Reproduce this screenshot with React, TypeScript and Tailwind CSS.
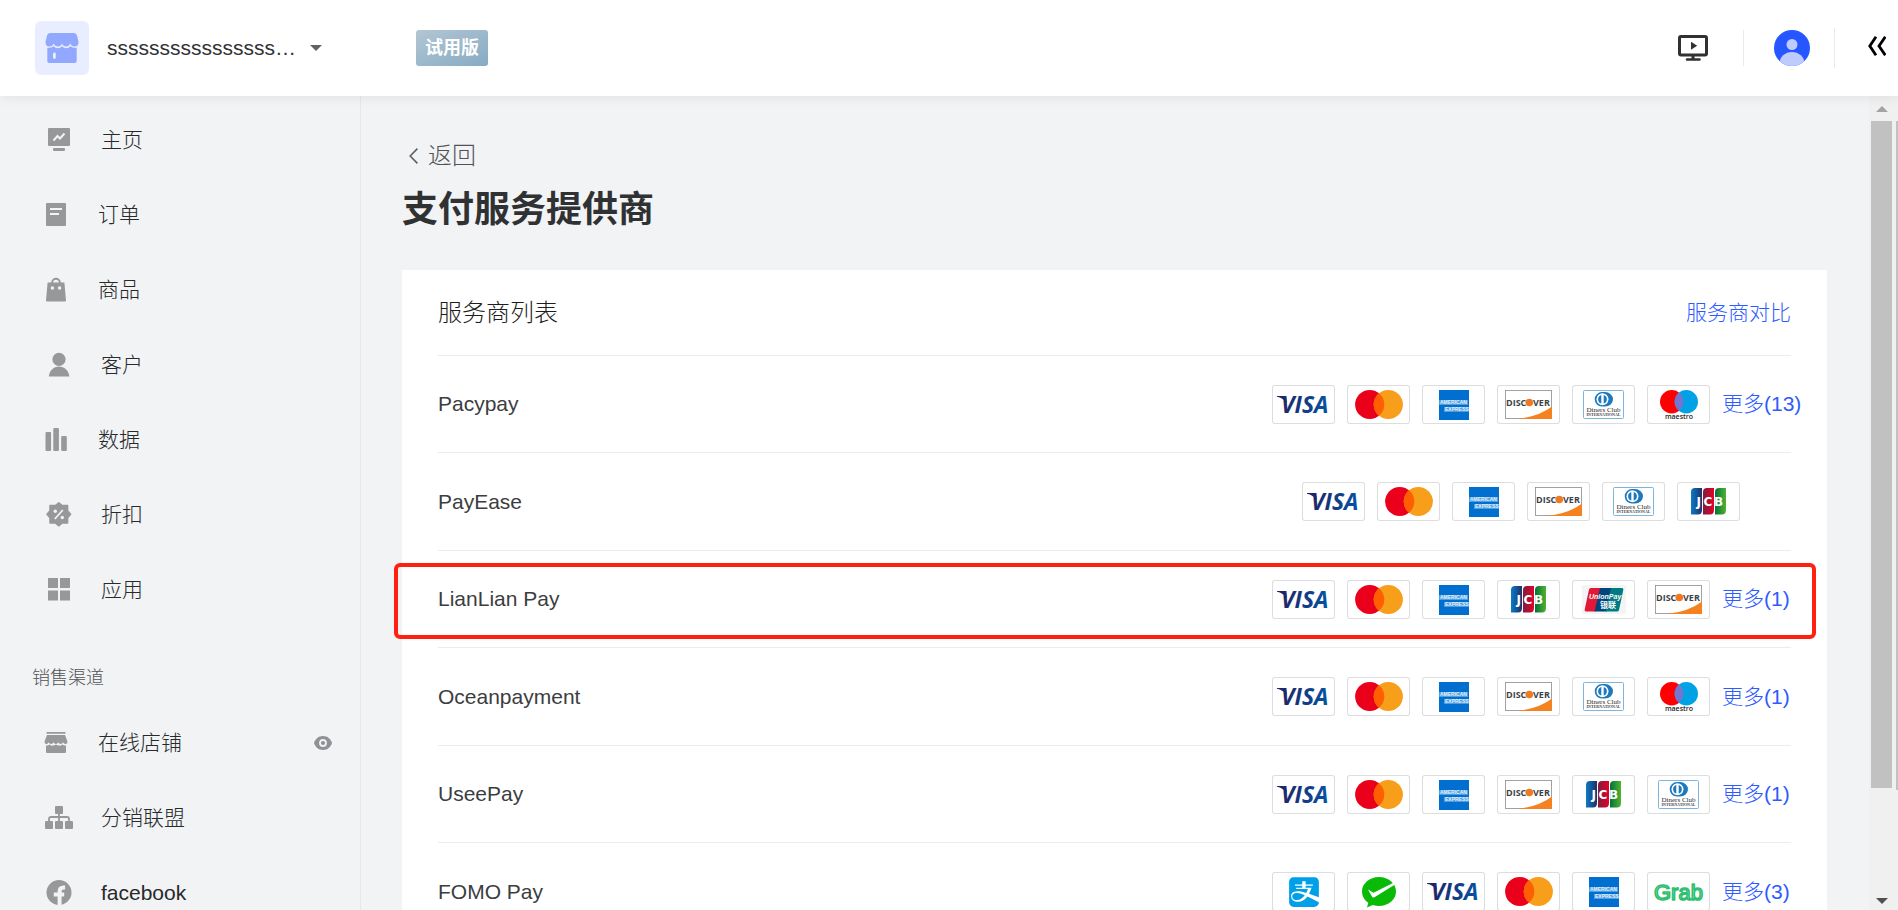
import React from 'react';
import clsx from 'clsx';
import { FaAlipay } from 'react-icons/fa';

type Brand =
  | 'visa'
  | 'mastercard'
  | 'amex'
  | 'discover'
  | 'diners'
  | 'maestro'
  | 'jcb'
  | 'unionpay'
  | 'alipay'
  | 'wechat'
  | 'grab';

interface Provider {
  name: string;
  brands: Brand[];
  more?: number;
  highlighted?: boolean;
}

interface NavItem {
  label: string;
  icon: React.ReactNode;
  wide?: boolean;
  preview?: boolean;
}

const PAGE_BG = '#f1f3f5';

const providers: Provider[] = [
  { name: 'Pacypay', brands: ['visa', 'mastercard', 'amex', 'discover', 'diners', 'maestro'], more: 13 },
  { name: 'PayEase', brands: ['visa', 'mastercard', 'amex', 'discover', 'diners', 'jcb'] },
  { name: 'LianLian Pay', brands: ['visa', 'mastercard', 'amex', 'jcb', 'unionpay', 'discover'], more: 1, highlighted: true },
  { name: 'Oceanpayment', brands: ['visa', 'mastercard', 'amex', 'discover', 'diners', 'maestro'], more: 1 },
  { name: 'UseePay', brands: ['visa', 'mastercard', 'amex', 'discover', 'jcb', 'diners'], more: 1 },
  { name: 'FOMO Pay', brands: ['alipay', 'wechat', 'visa', 'mastercard', 'amex', 'grab'], more: 3 },
];

const mainNav: NavItem[] = [
  {
    label: '主页',
    wide: true,
    icon: (
      <>
        <rect x="4" y="2" width="22" height="18" rx="1" />
        <rect x="9" y="22" width="12" height="3" rx="1" />
        <path d="M9.5 14.5l4-4.5 2.5 2.5 4.5-5" fill="none" stroke={PAGE_BG} strokeWidth="2" />
      </>
    ),
  },
  {
    label: '订单',
    icon: (
      <>
        <rect x="2" y="2" width="20" height="23" rx="1" />
        <path d="M6 8h12M6 13h9" stroke={PAGE_BG} strokeWidth="2" />
      </>
    ),
  },
  {
    label: '商品',
    icon: (
      <>
        <path d="M3.6 6.5h16.8L22 24.5q0 1-1 1H3q-1 0-1-1z" />
        <path d="M8.2 7.5V6.4a3.8 3.6 0 0 1 7.6 0v1.1" fill="none" stroke="#979899" strokeWidth="2" />
        <circle cx="8.4" cy="12" r="1.7" fill={PAGE_BG} />
        <circle cx="15.6" cy="12" r="1.7" fill={PAGE_BG} />
      </>
    ),
  },
  {
    label: '客户',
    wide: true,
    icon: (
      <>
        <circle cx="15" cy="8.4" r="6.6" />
        <path d="M4.8 25.4C5.6 19.4 9.8 15.6 15 15.6s9.6 3.8 10.4 9.8z" />
      </>
    ),
  },
  {
    label: '数据',
    icon: (
      <>
        <rect x="1.5" y="6" width="5.6" height="19" rx="1" />
        <rect x="9.3" y="2" width="5.6" height="23" rx="1" />
        <rect x="17.2" y="10" width="5.6" height="15" rx="1" />
      </>
    ),
  },
  {
    label: '折扣',
    wide: true,
    icon: (
      <>
        <path
          d="M14.8 1.8l3.4 2.8h5.4v5.2l3 3.5-3 3.500v5.200h-5.400l-3.400 2.800-3.400-2.800H6v-5.200l-3-3.500 3-3.500V4.600h5.400z"
          stroke="#979899"
          strokeWidth="1.500"
          strokeLinejoin="round"
        />
        <path d="M18.8 9l-8 9" stroke={PAGE_BG} strokeWidth="1.8" />
        <circle cx="11.300" cy="10.300" r="1.700" fill={PAGE_BG} />
        <circle cx="18.300" cy="16.500" r="1.700" fill={PAGE_BG} />
      </>
    ),
  },
  {
    label: '应用',
    wide: true,
    icon: <path d="M4 2h10v10H4zM16 2h10v10H16zM4 14.5h10v10H4zM16 14.5h10v10H16z" />,
  },
];

const channelNav: NavItem[] = [
  {
    label: '在线店铺',
    preview: true,
    icon: (
      <>
        <rect x="2.5" y="3" width="19" height="1.8" rx=".5" />
        <path d="M3 6h18l2.5 6.5q0 2.5-2 2.5t-2.4-1.7q-.6 1.7-2.400 1.700t-2.400-1.700q-.6 1.700-2.400 1.700t-2.400-1.700q-.6 1.700-2.400 1.700t-2.400-1.700Q4.200 15 2.400 15 .5 15 .5 12.500z" />
        <path d="M2 16.5q2.300.4 3.500-.9 1.300 1.300 3.200 1 2-.1 3.300-1.200 1.300 1.100 3.300 1.200 1.900.3 3.200-1 1.200 1.300 3.500.9v6.500q0 1-1 1H3q-1 0-1-1z" />
      </>
    ),
  },
  {
    label: '分销联盟',
    wide: true,
    icon: (
      <>
        <rect x="11" y="2" width="8" height="8" rx="1" />
        <rect x="1" y="17" width="8" height="8" rx="1" />
        <rect x="11" y="17" width="8" height="8" rx="1" />
        <rect x="21" y="17" width="8" height="8" rx="1" />
        <path d="M15 9v9M5 18v-3q0-2 2-2h16q2 0 2 2v3" fill="none" stroke="#979899" strokeWidth="1.800" />
      </>
    ),
  },
  {
    label: 'facebook',
    wide: true,
    icon: (
      <>
        <circle cx="15" cy="13.5" r="12.5" />
        <path d="M15.6 27V12.5q0-4 4-4h1.5M9.800 15.500h10.400" fill="none" stroke={PAGE_BG} strokeWidth="4" />
      </>
    ),
  },
];

const Visa = () => (
  <>
    <defs>
      <linearGradient id="visaFill" x1="0" x2="1">
        <stop offset="0" stopColor="#1f2566" />
        <stop offset="1" stopColor="#0653a4" />
      </linearGradient>
    </defs>
    <path d="M5 11h6.500q2 .2 2.500 2l1 5Q11 13 5 11.800z" fill="#1f2566" />
    <text x="9" y="28" fontSize="23" fontWeight="bold" fontStyle="italic" fontFamily="Open Sans, sans-serif" fill="url(#visaFill)">
      VISA
    </text>
  </>
);

const Mastercard = () => (
  <>
    <circle cx="22.7" cy="19.5" r="14.6" fill="#eb001b" />
    <circle cx="41.3" cy="19.5" r="14.6" fill="#f79e1b" />
    <path d="M32 8.25a14.600 14.600 0 0 1 0 22.500 14.600 14.600 0 0 1 0-22.500z" fill="#ff5f00" />
  </>
);

const Amex = () => (
  <>
    <rect x="17" y="5" width="30" height="30" fill="#006fcf" />
    <rect x="17" y="15" width="29" height="5" fill="#4f9fe0" />
    <rect x="22" y="22" width="25" height="5" fill="#4f9fe0" />
    <text x="18" y="19" fontSize="5" fontWeight="bold" fill="#e3f1fc">AMERICAN</text>
    <text x="23" y="26" fontSize="5" fontWeight="bold" fill="#e3f1fc">EXPRESS</text>
  </>
);

const Discover = () => (
  <>
    <rect x="8.500" y="5.500" width="46" height="28" fill="#fff" stroke="#8b8b8b" strokeWidth=".8" />
    <path d="M20 34Q42 31.500 55 21.500V34z" fill="#f58220" />
    <text x="9" y="21" fontSize="9" fontWeight="bold" fontFamily="Open Sans, sans-serif" fill="#3d4147">DISC</text>
    <circle cx="32.300" cy="17.500" r="3.800" fill="#f07a24" />
    <text x="36" y="21" fontSize="9" fontWeight="bold" fontFamily="Open Sans, sans-serif" fill="#3d4147">VER</text>
  </>
);

const Diners = () => (
  <>
    <rect x="11.500" y="5.500" width="40" height="28" rx="1" fill="#fff" stroke="#7db5dc" />
    <path d="M30 7h3a8 7.300 0 0 1 0 14.600h-3A7.300 7.300 0 0 1 30 7z" fill="#1d79bd" />
    <circle cx="30.500" cy="14.300" r="6" fill="#fff" />
    <path d="M29.300 10a4.500 4.500 0 0 0 0 8.600zM31.700 10a4.500 4.500 0 0 1 0 8.600z" fill="#1d79bd" />
    <text x="31.500" y="27" fontSize="7" textAnchor="middle" fontFamily="Liberation Serif, serif" fill="#2b2b2b">Diners Club</text>
    <text x="31.500" y="31" fontSize="4" fontWeight="bold" textAnchor="middle" fontFamily="Liberation Serif, serif" fill="#444">INTERNATIONAL</text>
  </>
);

const Maestro = () => (
  <>
    <circle cx="24.700" cy="16.700" r="11.700" fill="#ff0000" />
    <circle cx="39.300" cy="16.700" r="11.700" fill="#00a2e5" />
    <path d="M32 7.550a11.700 11.700 0 0 1 0 18.300 11.700 11.700 0 0 1 0-18.300z" fill="#7375cf" />
    <text x="32" y="34" fontSize="7" fontWeight="600" textAnchor="middle" fontFamily="Open Sans, sans-serif" fill="#222">maestro</text>
  </>
);

const Jcb = () => (
  <>
    <defs>
      <linearGradient id="jcbBlue" x1="0" x2="1">
        <stop offset="0" stopColor="#0b7cc4" />
        <stop offset="1" stopColor="#1f2f6e" />
      </linearGradient>
      <linearGradient id="jcbRed" x1="0" x2="1">
        <stop offset="0" stopColor="#7c1f3b" />
        <stop offset="1" stopColor="#e6002d" />
      </linearGradient>
      <linearGradient id="jcbGreen" x1="0" x2="1">
        <stop offset="0" stopColor="#00733c" />
        <stop offset="1" stopColor="#53b230" />
      </linearGradient>
    </defs>
    <path d="M18 6h7v22q0 4.500-4 4.500h-7V10q0-4 4-4z" fill="url(#jcbBlue)" />
    <path d="M30 6h7v22q0 4.500-4 4.500h-7V10q0-4 4-4z" fill="url(#jcbRed)" />
    <path d="M42 6h7v22q0 4.500-4 4.500h-7V10q0-4 4-4z" fill="url(#jcbGreen)" />
    <g fontSize="12" fontWeight="bold" fontFamily="DejaVu Sans, sans-serif" fill="#fff">
      <text x="19.500" y="24">J</text>
      <text x="26.500" y="24">C</text>
      <text x="37" y="24">B</text>
    </g>
  </>
);

const UnionPay = () => (
  <>
    <rect x="10" y="5" width="44" height="29" fill="#f4f4f4" />
    <path d="M19 8h10l-5.500 23.500H14q-1.800 0-1.300-2L17 9.500Q17.400 8 19 8z" fill="#e21836" />
    <path d="M28 8h12l-5.500 23.500H22.500z" fill="#00447c" />
    <path d="M39 8h11q1.800 0 1.300 2L47 30q-.4 1.500-2 1.500H33.500z" fill="#007b84" />
    <text x="17" y="19" fontSize="7" fontWeight="bold" fontStyle="italic" fill="#fff">UnionPay</text>
    <text x="28" y="28" fontSize="8" fontWeight="bold" fill="#fff" fontFamily="Noto Sans CJK SC, sans-serif">银联</text>
  </>
);

const Alipay = () => <FaAlipay x="15" y="3" size={34} color="#00a0e9" />;

const WechatPay = () => (
  <>
    <path d="M32 5c9.500 0 17 6.500 17 14.500S41.500 34 32 34c-2.200 0-4.400-.3-6.300-1L20 35.500l1.300-4.700C17.400 28 15 24 15 19.500 15 11.500 22.500 5 32 5z" fill="#09bb07" />
    <path d="M21 17.500l5.500 3.200L47 10.500l1 2-20.500 12.700q-2 1-2.700-1z" fill="#fff" />
  </>
);

const Grab = () => (
  <text x="7" y="28" fontSize="22" fill="#b8ecd0" stroke="#2fbf71" strokeWidth="1.600" strokeLinejoin="round">Grab</text>
);

const brandLogos: Record<Brand, { title: string; Logo: React.FC }> = {
  visa: { title: 'Visa', Logo: Visa },
  mastercard: { title: 'Mastercard', Logo: Mastercard },
  amex: { title: 'American Express', Logo: Amex },
  discover: { title: 'Discover', Logo: Discover },
  diners: { title: 'Diners Club', Logo: Diners },
  maestro: { title: 'Maestro', Logo: Maestro },
  jcb: { title: 'JCB', Logo: Jcb },
  unionpay: { title: 'UnionPay', Logo: UnionPay },
  alipay: { title: 'Alipay', Logo: Alipay },
  wechat: { title: 'WeChat Pay', Logo: WechatPay },
  grab: { title: 'Grab', Logo: Grab },
};

const BrandCard: React.FC<{ brand: Brand }> = ({ brand }) => {
  const { title, Logo } = brandLogos[brand];
  return (
    <div className="w-[63px] h-[39px] rounded-[3px] bg-white ring-1 ring-inset ring-[#dcdddf]">
      <svg viewBox="0 0 63 39" className="w-full h-full" role="img" aria-label={title} fontFamily="Liberation Sans, sans-serif">
        <Logo />
      </svg>
    </div>
  );
};

const NavLink: React.FC<{ item: NavItem }> = ({ item }) => (
  <li className="h-[75px] pl-11 pr-7 flex items-center">
    <a href="#" className="flex flex-1 items-center gap-[30px] text-[21px] leading-8 font-light text-[#28292b]">
      <svg
        viewBox={item.wide ? '0 0 27 27' : '0 0 24 27'}
        className={clsx('h-[27px] shrink-0 overflow-visible', item.wide ? 'w-[27px]' : 'w-6')}
        fill="#979899"
        aria-hidden="true"
      >
        {item.icon}
      </svg>
      <span>{item.label}</span>
    </a>
    {item.preview && (
      <button aria-label="预览">
        <svg viewBox="0 0 18 14" className="w-[18px] h-[14px]" fill="none">
          <path d="M9 0c4.500 0 7.700 2.800 9 7-1.300 4.200-4.500 7-9 7s-7.700-2.800-9-7c1.300-4.200 4.500-7 9-7z" fill="#8f9195" />
          <circle cx="9" cy="7" r="3" stroke={PAGE_BG} strokeWidth="1.800" />
        </svg>
      </button>
    )}
  </li>
);

const Header = () => (
  <header className="relative z-10 h-24 shrink-0 flex items-center justify-between bg-white pl-[35px] pr-3 shadow-[0_1px_12px_rgba(0,0,0,0.08)]">
    <div className="flex items-center">
      <div className="w-[54px] h-[54px] rounded-md bg-[#e8eeff] flex items-center justify-center">
        <svg viewBox="0 0 34 30" className="w-[34px] h-[30px]" fill="#92a8ff" aria-hidden="true">
          <path d="M5 0h24q2.500 0 3 2.500L33.500 9q0 4.500-4 4.500-3 0-4.200-3-1.200 3-4.200 3t-4.100-3q-1.200 3-4.200 3t-4.100-3q-1.200 3-4.200 3-4 0-4-4.500L2 2.500Q2.500 0 5 0z" />
          <path d="M2.300 14.700q3.700.6 6.200-1.500 1.800 2 4.200 2 2.600 0 4.300-2 1.700 2 4.300 2 2.400 0 4.200-2 2.500 2.100 6.200 1.500V28q0 2-2 2H4.300q-2 0-2-2z" />
          <rect x="8" y="19.500" width="2.800" height="6.500" rx="1.400" fill="#e8eeff" />
        </svg>
      </div>
      <button className="ml-[18px] flex items-center gap-[13px] text-[21px] leading-8 text-[#303133]">
        <span className="w-[190px] whitespace-nowrap text-left">ssssssssssssssss…</span>
        <svg viewBox="0 0 12 6" className="w-3 h-[6px]" fill="#606266" aria-hidden="true">
          <path d="M0 0h12L6 6z" />
        </svg>
      </button>
      <span className="ml-[94px] w-[72px] h-9 rounded-[3px] bg-linear-to-br from-[#b3c6d3] to-[#86abc4] text-lg font-bold text-white flex items-center justify-center">
        试用版
      </span>
    </div>
    <div className="flex items-center">
      <button aria-label="教程">
        <svg viewBox="0 0 30 26" className="w-[30px] h-[26px]" fill="none" stroke="#303133" aria-hidden="true">
          <rect x="1.500" y="1.500" width="27" height="18.500" rx="1.500" strokeWidth="3" />
          <path d="M15 20v4" strokeWidth="3" />
          <path d="M9 24.500h12.500" strokeWidth="2.500" strokeLinecap="round" />
          <path d="M13 6.800l6.200 4-6.200 4z" fill="#303133" stroke="none" />
        </svg>
      </button>
      <span className="ml-[35px] w-px h-9 bg-[#e8eaec]" />
      <button className="ml-[30px]" aria-label="账户">
        <svg viewBox="0 0 36 36" className="w-9 h-9" aria-hidden="true">
          <clipPath id="avatarClip">
            <circle cx="18" cy="18" r="18" />
          </clipPath>
          <g clipPath="url(#avatarClip)">
            <rect width="36" height="36" fill="#2656ff" />
            <circle cx="18" cy="14.500" r="5.500" fill="#becbff" />
            <ellipse cx="18" cy="33.500" rx="12.500" ry="11.500" fill="#becbff" />
          </g>
        </svg>
      </button>
      <span className="ml-6 w-px h-10 bg-[#e8eaec]" />
      <button className="ml-[33px]" aria-label="收起">
        <svg viewBox="0 0 18 20" className="w-[18px] h-5 mb-1" fill="none" stroke="#000" strokeWidth="2.800" aria-hidden="true">
          <path d="M8 .8L1.800 10 8 19.200M17.300.8L11 10l6.300 9.200" />
        </svg>
      </button>
    </div>
  </header>
);

const Sidebar = () => (
  <nav className="w-[361px] shrink-0 overflow-hidden border-r border-[#e6e8ea] pt-[6px]">
    <ul>
      {mainNav.map((item) => (
        <NavLink key={item.label} item={item} />
      ))}
    </ul>
    <h2 className="px-8 pt-[38px] pb-[13px] text-lg leading-[27px] font-light text-[#505255]">销售渠道</h2>
    <ul>
      {channelNav.map((item) => (
        <NavLink key={item.label} item={item} />
      ))}
    </ul>
  </nav>
);

const ProviderRow: React.FC<{ provider: Provider }> = ({ provider }) => (
  <li className="relative odd:h-[97px] even:h-[98px] flex items-center justify-between border-b border-[#ebecee]">
    <span className="text-[21px] leading-8 text-[#3c3d3f]">{provider.name}</span>
    <div className="flex items-center">
      <div className={clsx('flex gap-3', !provider.more && 'mr-[51px]')}>
        {provider.brands.map((brand) => (
          <BrandCard key={brand} brand={brand} />
        ))}
      </div>
      {provider.more && (
        <a href="#" className="ml-3 w-[69px] whitespace-nowrap text-[21px] leading-8 font-light text-[#2e5bff]">
          更多({provider.more})
        </a>
      )}
    </div>
    {provider.highlighted && (
      <div className="pointer-events-none absolute top-3 bottom-2 -left-11 -right-[25px] rounded-md border-4 border-[#ff2010]" />
    )}
  </li>
);

const Scrollbar = () => (
  <div className="w-[29px] shrink-0 flex justify-between bg-[#f0f0f0] pl-[2px]" aria-hidden="true">
    <div className="w-[21px] flex flex-col items-center">
      <svg viewBox="0 0 12 6" className="w-3 h-[6px] mt-[10px] mb-[9px]" fill="#a3a3a3">
        <path d="M0 6h12L6 0z" />
      </svg>
      <div className="w-full flex-1 bg-[#c1c1c1]" />
      <svg viewBox="0 0 12 6" className="w-3 h-[6px] mt-[110px] mb-[6px]" fill="#505050">
        <path d="M0 0h12L6 6z" />
      </svg>
    </div>
    <div className="w-[2px] mt-[25px] mb-[120px] bg-[#c1c1c1]" />
  </div>
);

const App: React.FC = () => {
  return (
    <div className="h-screen flex flex-col overflow-hidden bg-[#f1f3f5] font-['Liberation_Sans','Noto_Sans_CJK_SC',sans-serif]">
      <Header />
      <div className="flex-1 min-h-0 flex">
        <Sidebar />
        <main className="flex-1 min-w-0 overflow-hidden pl-[41px] pr-[42px] pt-[42px]">
          <a href="#" className="inline-flex items-center gap-[10px] pl-[7px] text-2xl leading-9 font-light text-[#505255]">
            <svg viewBox="0 0 9 16" className="w-[9px] h-4" fill="none" stroke="#606266" strokeWidth="1.600" aria-hidden="true">
              <path d="M8.400.6L1.200 8l7.200 7.400" />
            </svg>
            返回
          </a>
          <h1 className="mt-[9px] text-4xl leading-[54px] font-bold text-[#303133]">支付服务提供商</h1>

          <section className="mt-[33px] bg-white px-9">
            <div className="h-[86px] flex items-center justify-between border-b border-[#ebecee]">
              <h2 className="text-2xl font-light text-[#1d1e20]">服务商列表</h2>
              <a href="#" className="text-[21px] leading-8 font-light text-[#2e5bff]">服务商对比</a>
            </div>
            <ul>
              {providers.map((provider) => (
                <ProviderRow key={provider.name} provider={provider} />
              ))}
            </ul>
          </section>
        </main>
        <Scrollbar />
      </div>
    </div>
  );
};

export default App;
